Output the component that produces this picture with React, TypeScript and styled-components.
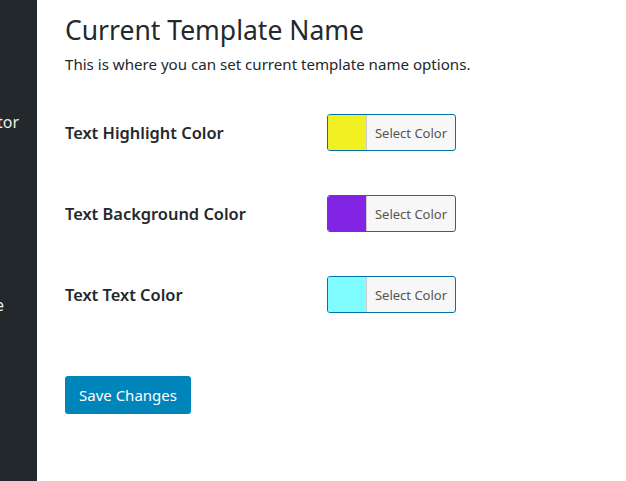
import React from 'react';

import styled, { createGlobalStyle } from 'styled-components';

const settings = [
  { id: 'highlight', label: 'Text Highlight Color', color: '#f0f023' },
  { id: 'background', label: 'Text Background Color', color: '#8224e3' },
  { id: 'text', label: 'Text Text Color', color: '#7ffcff' },
];

const App = () => {
  return (
    <>
      <GlobalStyle />
      <Page>
        <Sidebar>
          <MenuItem top={111} pad={18}>
            Editor
          </MenuItem>
          <MenuItem top={161} pad={33}>
            Theme
          </MenuItem>
        </Sidebar>
        <Main>
          <Title>Current Template Name</Title>
          <Description>
            This is where you can set current template name options.
          </Description>
          <Form>
            {settings.map((item) => (
              <Row key={item.id}>
                <Label>{item.label}</Label>
                <ColorButton>
                  <Swatch color={item.color} />
                  <ButtonText>Select Color</ButtonText>
                </ColorButton>
              </Row>
            ))}
          </Form>
          <SaveBtn>Save Changes</SaveBtn>
        </Main>
      </Page>
    </>
  );
};

const GlobalStyle = createGlobalStyle`
  body {
    margin: 0;
    background: #fff;
    font-family: "Segoe UI", "Noto Sans", sans-serif;
    color: #23282d;
  }
`;

const Page = styled.div`
  height: 481px;

  display: flex;
  flex-direction: row;
`;

const Sidebar = styled.nav`
  width: 37px;
  flex-shrink: 0;

  background: #23282d;
  overflow: hidden;

  display: flex;
  flex-direction: column;
`;

const MenuItem = styled.div<{ top: number; pad: number }>`
  margin-top: ${(p) => p.top}px;
  padding-right: ${(p) => p.pad}px;

  display: flex;
  justify-content: flex-end;

  white-space: nowrap;
  color: #eee;
  font-size: 16px;
  line-height: 22px;
`;

const Main = styled.main`
  padding: 10px 0 0 28px;

  display: flex;
  flex-direction: column;
  align-items: flex-start;
`;

const Title = styled.h1`
  margin: 0;

  font-size: 26.5px;
  font-weight: 400;
  line-height: 40px;
`;

const Description = styled.p`
  margin: 3px 0 0;

  font-size: 15.1px;
  line-height: 22px;
`;

const Form = styled.section`
  margin-top: 39px;

  display: flex;
  flex-direction: column;
  gap: 44px;
`;

const Row = styled.div`
  display: flex;
  flex-direction: row;
  align-items: center;
`;

const Label = styled.div`
  width: 262px;

  font-size: 16.4px;
  font-weight: 600;
`;

const ColorButton = styled.button`
  width: 129px;
  height: 37px;
  padding: 0;

  display: flex;
  flex-direction: row;

  border: 1px solid #0073aa;
  border-radius: 3px;
  background: #f7f7f7;
  overflow: hidden;
  cursor: pointer;
`;

const Swatch = styled.span<{ color: string }>`
  width: 38px;
  height: 100%;

  background: ${(p) => p.color};
  border-right: 1px solid #ccc;
`;

const ButtonText = styled.span`
  flex: 1;
  align-self: center;

  font-family: "Segoe UI", "Noto Sans", sans-serif;
  font-size: 13px;
  color: #555;
`;

const SaveBtn = styled.button`
  margin-top: 63px;
  height: 38px;
  padding: 0 14px;

  border: none;
  border-radius: 3px;
  background: #0085ba;

  font-family: "Segoe UI", "Noto Sans", sans-serif;
  font-size: 15px;
  color: #fff;
  cursor: pointer;
`;

export default App;
